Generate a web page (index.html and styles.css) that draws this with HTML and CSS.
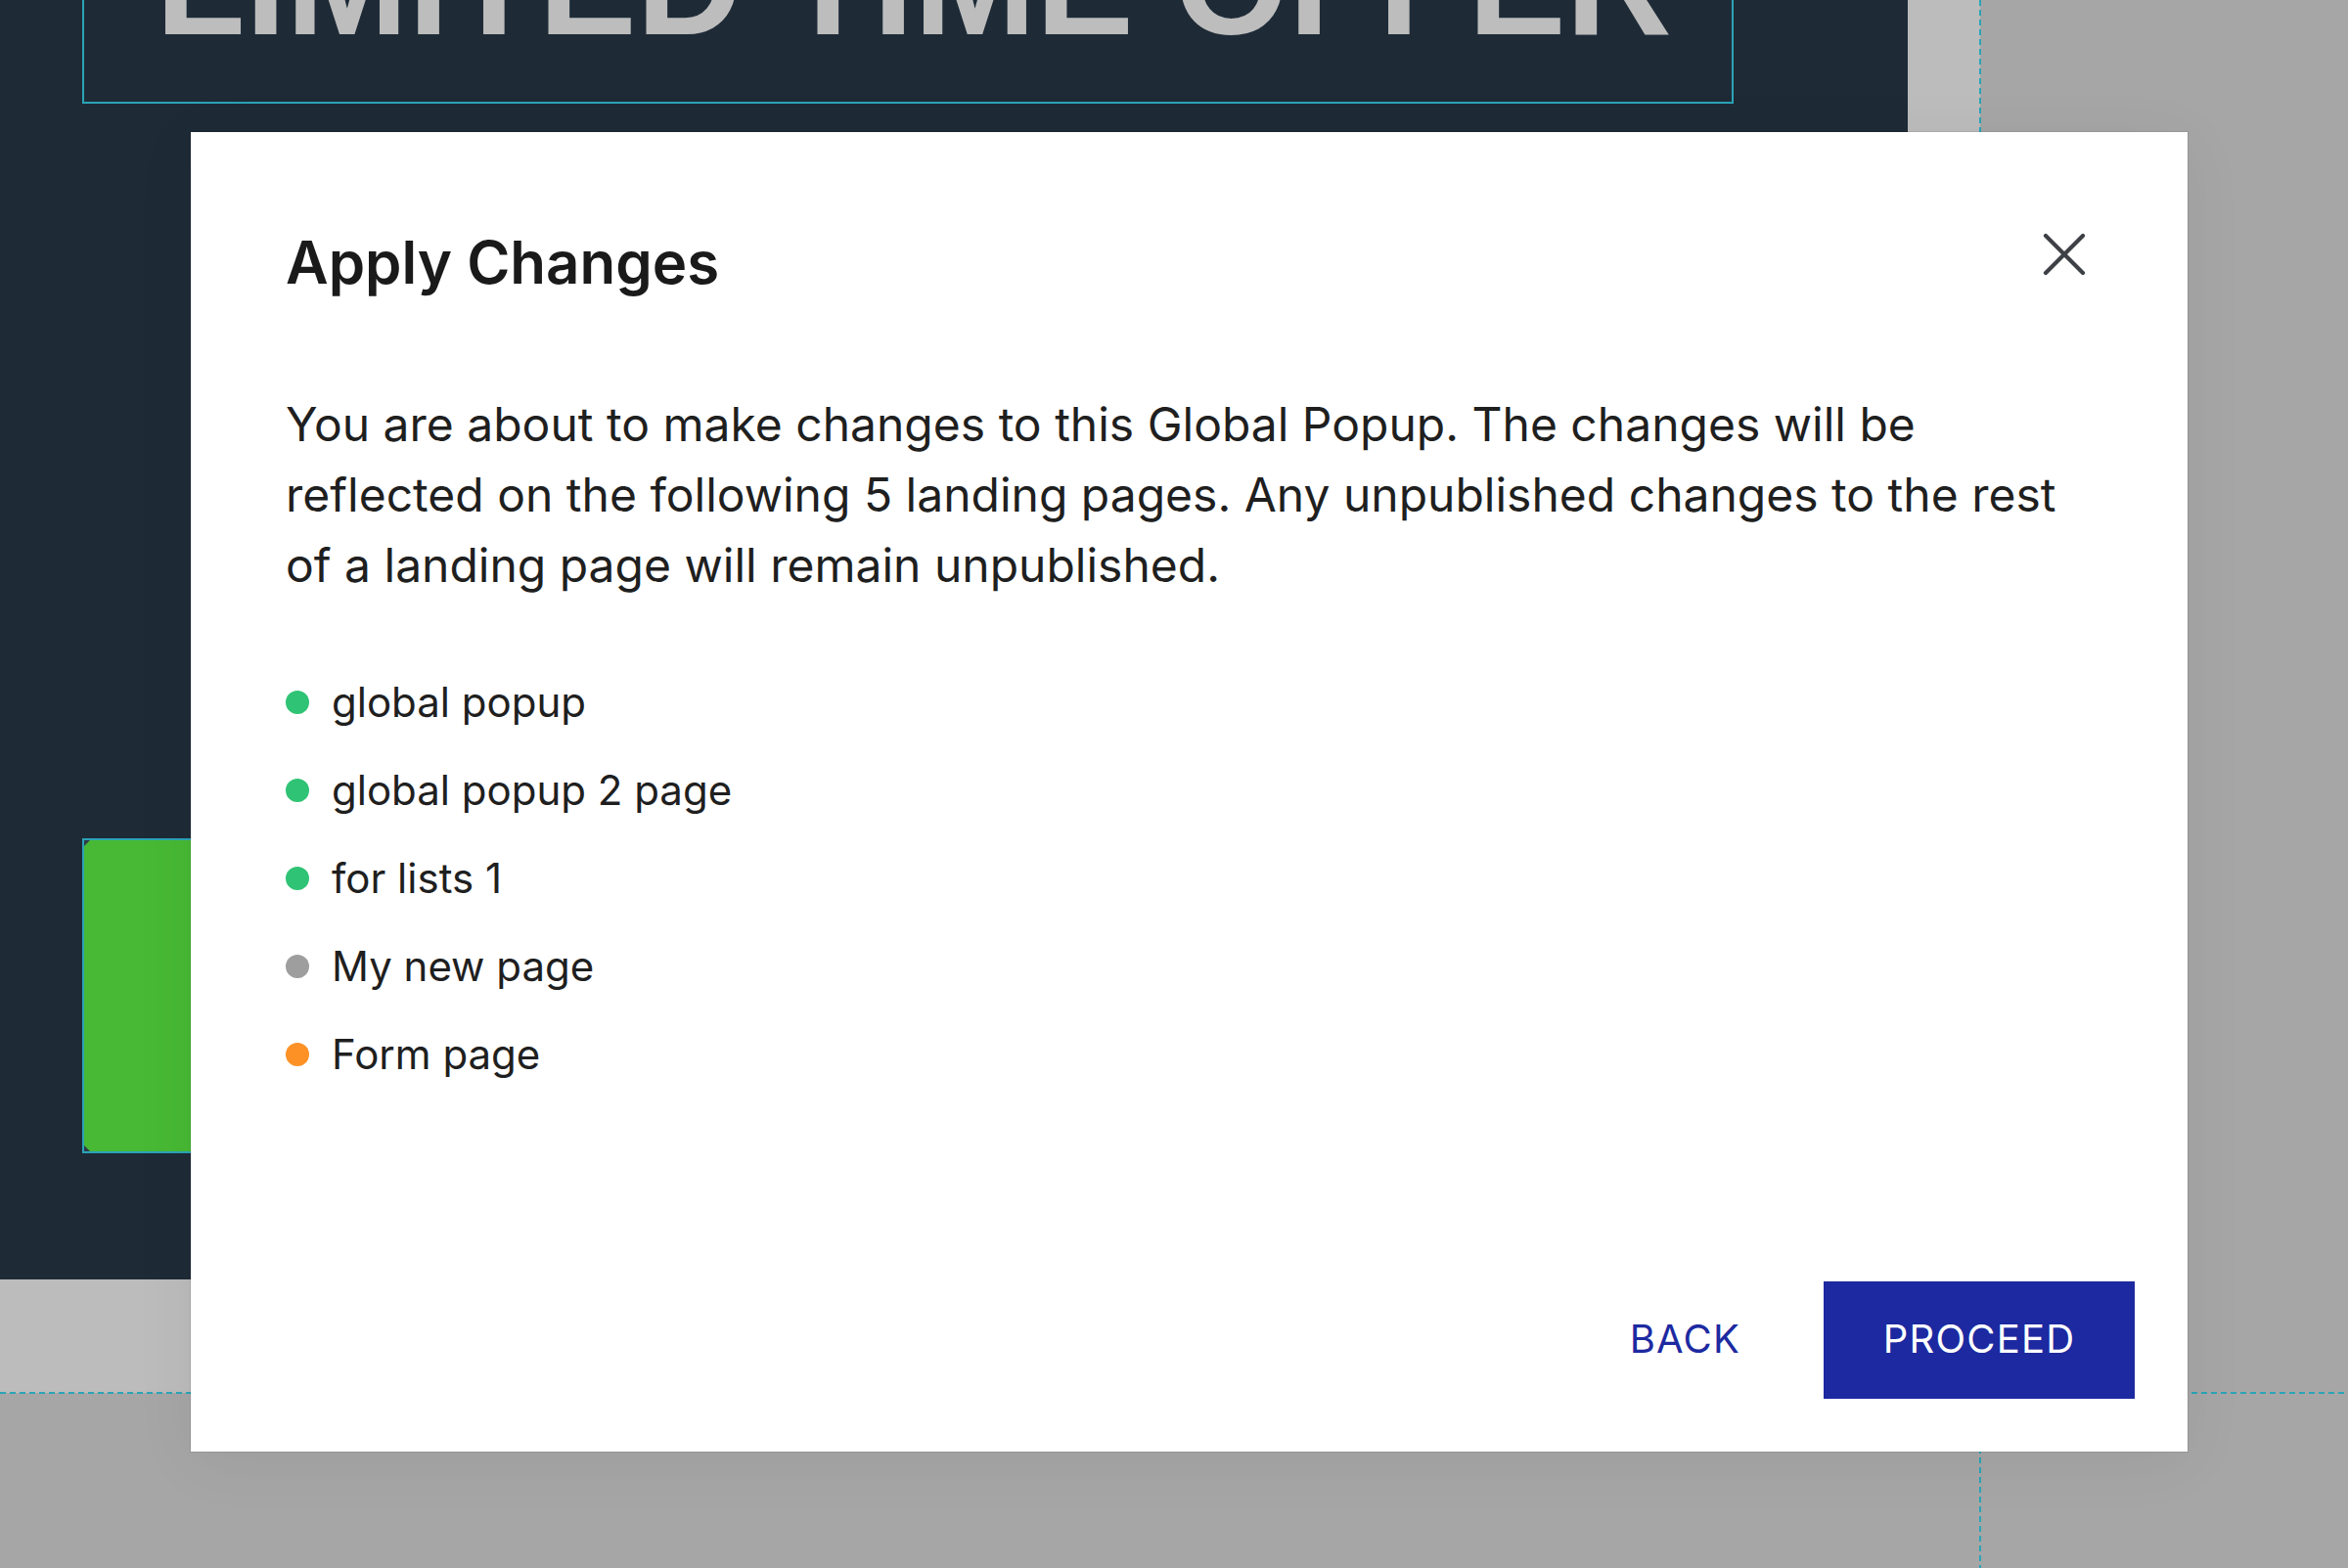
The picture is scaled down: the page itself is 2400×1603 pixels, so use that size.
FILE: index.html
```html
<!DOCTYPE html>
<html>
<head lang="en">
    <meta charset="UTF-8">
    <title>Apply Changes</title>
    <link rel="stylesheet" href="styles.css">
</head>
<body>
<div id="editor">
    <div class="page">
        <section class="hero">
            <div class="offer-box">
                <h1 class="offer-title">LIMITED TIME OFFER</h1>
            </div>
            <div class="cta-block">
                <span class="handle handle-tl"></span>
                <span class="handle handle-bl"></span>
            </div>
        </section>
    </div>
    <div class="guide guide-v"></div>
    <div class="guide guide-h"></div>
</div>

<div class="overlay">
    <div class="dialog">
        <div class="dialog-head">
            <h2 class="dialog-title">Apply Changes</h2>
            <button class="close" type="button" aria-label="Close">
                <svg width="44" height="44" viewBox="0 0 44 44">
                    <path d="M3 3 L41 41 M41 3 L3 41" stroke="#3d4045" stroke-width="4.2" stroke-linecap="round" fill="none"/>
                </svg>
            </button>
        </div>
        <p class="dialog-text">You are about to make changes to this Global Popup. The changes will be reflected on the following 5 landing pages. Any unpublished changes to the rest of a landing page will remain unpublished.</p>
        <ul class="pages">
            <li><span class="dot published"></span>global popup</li>
            <li><span class="dot published"></span>global popup 2 page</li>
            <li><span class="dot published"></span>for lists 1</li>
            <li><span class="dot draft"></span>My new page</li>
            <li><span class="dot changed"></span>Form page</li>
        </ul>
        <div class="actions">
            <button class="btn btn-text" type="button">BACK</button>
            <button class="btn btn-primary" type="button">PROCEED</button>
        </div>
    </div>
</div>
</body>
</html>
```

FILE: styles.css
```css
*{
    margin: 0;
    padding: 0;
    box-sizing: border-box;
}
ul{
    list-style: none;
}
html, body{
    width: 2400px;
    height: 1603px;
    overflow: hidden;
}
body{
    background: #a6a6a6;
    font-family: Inter, "Noto Sans", sans-serif;
    position: relative;
}

/* editor canvas behind the dialog */
#editor{
    width: 100%;
    height: 100%;
    position: relative;
}
.page{
    width: 2024px;
    height: 1424px;
    background: #bcbcbc;
}
.hero{
    width: 1950px;
    height: 1308px;
    background: #1e2b37;
    padding-left: 84px;
    display: flex;
    flex-direction: column;
    overflow: hidden;
}
.offer-box{
    width: 1688px;
    margin-top: -160px;
    height: 266px;
    border: 2px solid #2ba3b6;
    display: flex;
    align-items: flex-end;
    padding: 0 0 46px 73px;
}
.offer-title{
    font-family: "Liberation Sans", Arial, sans-serif;
    font-weight: bold;
    font-size: 150px;
    line-height: 1;
    color: #bdbdbd;
    white-space: nowrap;
}
.cta-block{
    width: 400px;
    height: 322px;
    margin-top: 751px;
    background: #47b934;
    border: 2px solid #2ba3b6;
    position: relative;
}
.handle{
    position: absolute;
    left: 0;
    width: 0;
    height: 0;
}
.handle-tl{
    top: 0;
    border-top: 6px solid #2f3a4a;
    border-right: 6px solid transparent;
}
.handle-bl{
    bottom: 0;
    border-bottom: 6px solid #2f3a4a;
    border-right: 6px solid transparent;
}

.guide{
    position: absolute;
}
.guide-v{
    left: 2023px;
    top: 0;
    width: 2px;
    height: 100%;
    background: repeating-linear-gradient(to bottom, #2aa5b8 0, #2aa5b8 6px, transparent 6px, transparent 10px);
}
.guide-h{
    left: 0;
    top: 1423px;
    width: 100%;
    height: 2px;
    background: repeating-linear-gradient(to right, #2aa5b8 0, #2aa5b8 6px, transparent 6px, transparent 10px);
}

/* dialog */
.overlay{
    position: absolute;
    left: 0;
    top: 0;
    width: 100%;
    height: 100%;
}
.dialog{
    position: absolute;
    left: 195px;
    top: 135px;
    width: 2041px;
    height: 1349px;
    background: #fff;
    box-shadow: 0 0 0 1px rgba(0,0,0,0.08), 0 10px 60px rgba(0,0,0,0.06);
    display: flex;
    flex-direction: column;
    padding: 93px 104px 53px 97px;
    color: #1d1d1d;
}
.dialog-head{
    display: flex;
    justify-content: space-between;
    align-items: flex-start;
}
.dialog-title{
    font-size: 60px;
    line-height: 80px;
    font-weight: 600;
    color: #1a1a1a;
}
.close{
    width: 44px;
    height: 44px;
    margin-top: 10px;
    border: none;
    background: none;
    cursor: pointer;
}
.close svg{
    display: block;
}
.dialog-text{
    margin-top: 90px;
    font-size: 48px;
    line-height: 72px;
    color: #1f1f1f;
    padding-right: 10px;
}
.pages{
    margin-top: 76px;
}
.pages li{
    display: flex;
    align-items: center;
    height: 56px;
    margin-bottom: 34px;
    font-size: 42px;
    line-height: 56px;
    color: #1f1f1f;
}
.dot{
    width: 24px;
    height: 24px;
    border-radius: 50%;
    margin-right: 23px;
    flex-shrink: 0;
}
.published{
    background: #2fc375;
}
.draft{
    background: #9e9e9e;
}
.changed{
    background: #fd9126;
}
.actions{
    margin-top: auto;
    margin-right: -50px;
    margin-bottom: 1px;
    display: flex;
    justify-content: flex-end;
    align-items: center;
}
.btn{
    font-family: Inter, "Noto Sans", sans-serif;
    font-size: 40px;
    font-weight: 400;
    letter-spacing: 1.2px;
    border: none;
    cursor: pointer;
    height: 120px;
    padding-bottom: 4px;
}
.btn-text{
    background: none;
    color: #1d2aa1;
    padding-left: 24px;
    padding-right: 24px;
    margin-right: 61px;
}
.btn-primary{
    width: 318px;
    background: #1c29a0;
    color: #fff;
}
```
